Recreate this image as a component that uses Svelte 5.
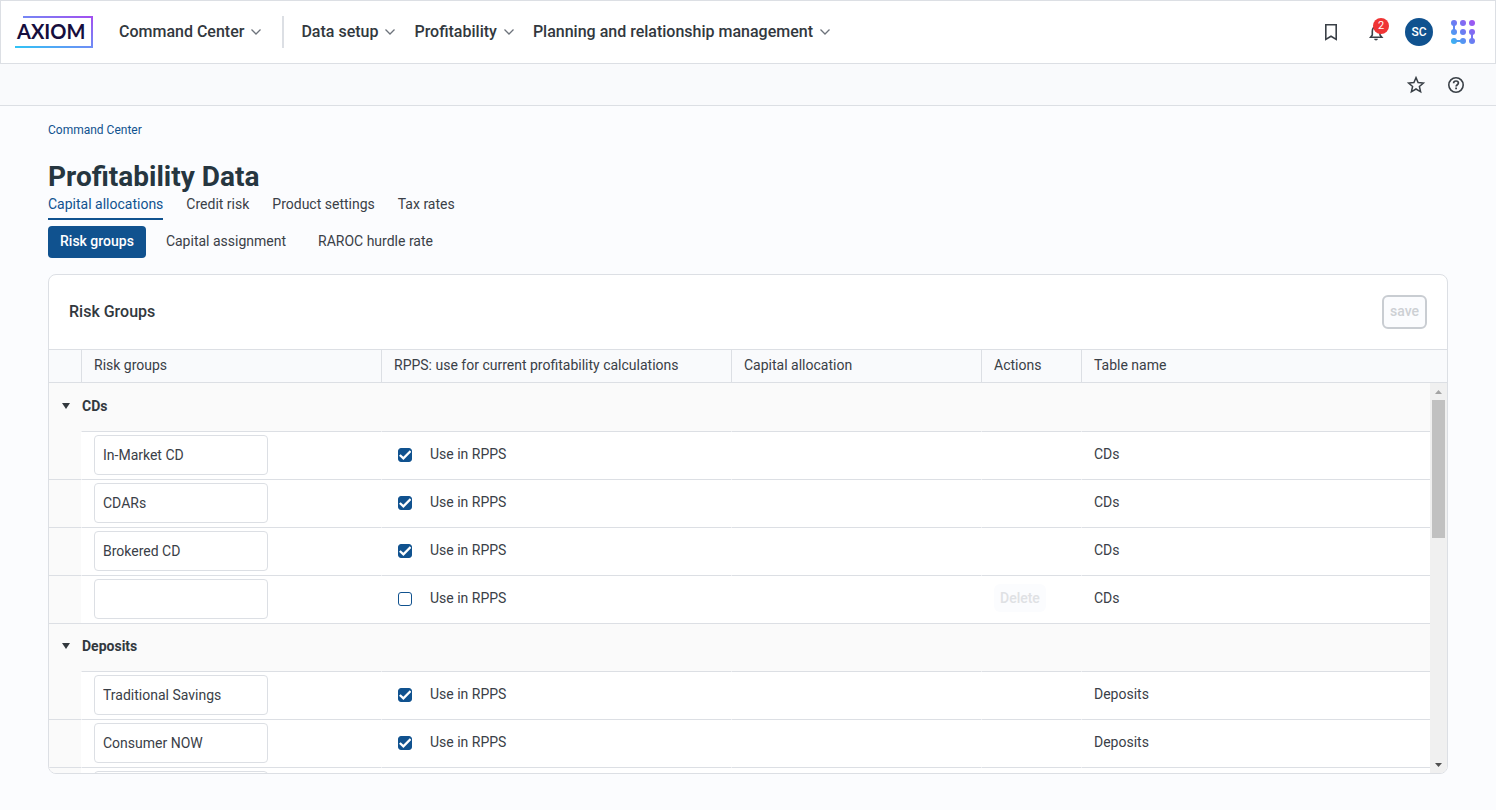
<script>
	import { onMount } from "svelte";

	const menus = ["Data setup", "Profitability", "Planning and relationship management"];
	const tabs = ["Capital allocations", "Credit risk", "Product settings", "Tax rates"];
	const subTabs = ["Risk groups", "Capital assignment", "RAROC hurdle rate"];

	let activeTab = "Capital allocations";
	let activeSubTab = "Risk groups";

	let groups = [
		{
			name: "CDs",
			open: true,
			rows: [
				{ name: "In-Market CD", use: true },
				{ name: "CDARs", use: true },
				{ name: "Brokered CD", use: true },
				{ name: "", use: false, isNew: true },
			],
		},
		{
			name: "Deposits",
			open: true,
			rows: [
				{ name: "Traditional Savings", use: true },
				{ name: "Consumer NOW", use: true },
				{ name: "Business Checking", use: true },
				{ name: "Money Market", use: true },
				{ name: "Health Savings", use: true },
				{ name: "", use: false, isNew: true },
			],
		},
		{
			name: "Loans",
			open: true,
			rows: [
				{ name: "Commercial", use: true },
				{ name: "Consumer", use: true },
				{ name: "Mortgage", use: true },
				{ name: "Home Equity", use: true },
				{ name: "Agriculture", use: true },
				{ name: "Small Business", use: true },
				{ name: "Student", use: true },
				{ name: "Credit Card", use: true },
				{ name: "", use: false, isNew: true },
			],
		},
	];

	let scroller;
	let track;
	let thumbHeight = 0;
	let thumbTop = 0;

	function updateThumb() {
		if (!scroller || !track) return;
		const ratio = scroller.clientHeight / scroller.scrollHeight;
		thumbHeight = Math.round(track.clientHeight * ratio);
		thumbTop = Math.round((scroller.scrollTop / scroller.scrollHeight) * track.clientHeight);
	}

	function scrollRows(amount) {
		scroller.scrollBy({ top: amount });
	}

	onMount(updateThumb);
</script>

<svelte:window on:resize={updateThumb} />

<div class="page">
	<header class="topbar">
		<a class="logo" href="#home" aria-label="Axiom home">
			<svg width="80" height="34" viewBox="0 0 80 34">
				<defs>
					<linearGradient id="logo-line" x1="0" y1="1" x2="1" y2="0">
						<stop offset="0" stop-color="#2fc3f5" />
						<stop offset="0.5" stop-color="#6f8df5" />
						<stop offset="1" stop-color="#a24ff0" />
					</linearGradient>
				</defs>
				<path d="M9 2H78V32H1" fill="none" stroke="url(#logo-line)" stroke-width="2" />
				<text x="3" y="24">AXIOM</text>
			</svg>
		</a>
		<button class="menu">
			Command Center
			<svg width="12" height="8" viewBox="0 0 12 8"><path d="M1.5 1.5L6 6L10.5 1.5" /></svg>
		</button>
		<span class="divider"></span>
		<nav>
			{#each menus as menu}
				<button class="menu">
					{menu}
					<svg width="12" height="8" viewBox="0 0 12 8"><path d="M1.5 1.5L6 6L10.5 1.5" /></svg>
				</button>
			{/each}
		</nav>
		<div class="user-tools">
			<button class="icon" aria-label="Bookmarks">
				<svg width="24" height="24" viewBox="0 0 24 24">
					<path d="M6.8 4.8H17.2V19.4L12 16.2L6.8 19.4Z" fill="none" stroke="#3a4047" stroke-width="1.6" />
				</svg>
			</button>
			<button class="icon bell" aria-label="Notifications">
				<svg width="24" height="24" viewBox="0 0 24 24">
					<path d="M6.6 17.2L8.3 15V11.5C8.3 8.8 9.6 7 12 7S16 8.8 16 11.5V15L17.8 17.2Z" fill="none" stroke="#3a4047" stroke-width="1.6" />
					<path d="M10.2 18.8H13.8C13.8 19.8 13 20.4 12 20.4S10.2 19.8 10.2 18.8Z" fill="#3a4047" />
				</svg>
				<span class="badge">2</span>
			</button>
			<button class="avatar">SC</button>
			<button class="icon" aria-label="Applications">
				<svg width="26" height="26" viewBox="0 0 26 26">
					<defs>
						<linearGradient id="dots" gradientUnits="userSpaceOnUse" x1="1" y1="25" x2="25" y2="1">
							<stop offset="0" stop-color="#35b8f2" />
							<stop offset="0.5" stop-color="#6b7cf2" />
							<stop offset="1" stop-color="#a64ff2" />
						</linearGradient>
					</defs>
					<g fill="url(#dots)">
						{#each [4, 13, 22] as cy}
							{#each [4, 13, 22] as cx}
								<circle {cx} {cy} r="3" />
							{/each}
						{/each}
						<rect x="3" y="4" width="2" height="9" />
						<rect x="21" y="13" width="2" height="9" />
						<rect x="4" y="21" width="9" height="2" />
					</g>
				</svg>
			</button>
		</div>
	</header>

	<div class="toolbar">
		<button class="icon" aria-label="Add to favorites">
			<svg width="20" height="20" viewBox="0 0 20 20">
				<path d="M10 2.6L12.1 7.5L17.4 8L13.4 11.5L14.6 16.8L10 14L5.4 16.8L6.6 11.5L2.6 8L7.9 7.5Z" fill="none" stroke="#3a4047" stroke-width="1.5" />
			</svg>
		</button>
		<button class="icon" aria-label="Help">
			<svg width="20" height="20" viewBox="0 0 20 20" fill="none" stroke="#3a4047">
				<circle cx="10" cy="10" r="7.2" stroke-width="1.6" />
				<path d="M7.6 8.2C7.6 6.8 8.6 6 10 6S12.4 6.8 12.4 8.1C12.4 9.7 10.1 9.8 10.1 11.6" stroke-width="1.7" />
				<path d="M9.2 13.4H11" stroke-width="1.8" />
			</svg>
		</button>
	</div>

	<main>
		<a class="breadcrumb" href="#command-center">Command Center</a>
		<h1>Profitability Data</h1>
		<div class="tabs">
			{#each tabs as tab}
				<button class:active={tab === activeTab} on:click={() => (activeTab = tab)}>{tab}</button>
			{/each}
		</div>
		<div class="sub-tabs">
			{#each subTabs as tab}
				<button class:active={tab === activeSubTab} on:click={() => (activeSubTab = tab)}>{tab}</button>
			{/each}
		</div>

		<section class="card">
			<div class="card-head">
				<h2>Risk Groups</h2>
				<button class="save" disabled>save</button>
			</div>
			<div class="grid">
				<div class="scroller" bind:this={scroller} on:scroll={updateThumb}>
					<table>
						<colgroup>
							<col class="c-gutter" />
							<col class="c-name" />
							<col class="c-use" />
							<col class="c-capital" />
							<col class="c-actions" />
							<col />
						</colgroup>
						<thead>
							<tr>
								<th></th>
								<th>Risk groups</th>
								<th>RPPS: use for current profitability calculations</th>
								<th>Capital allocation</th>
								<th>Actions</th>
								<th>Table name</th>
							</tr>
						</thead>
						<tbody>
							{#each groups as group}
								<tr class="group">
									<td colspan="6">
										<button on:click={() => (group.open = !group.open)}>
											<svg class:closed={!group.open} width="8" height="6" viewBox="0 0 8 6"><path d="M0 0H8L4 6Z" /></svg>
											{group.name}
										</button>
									</td>
								</tr>
								{#if group.open}
									{#each group.rows as row}
										<tr class="row">
											<td class="gutter"></td>
											<td class="name"><input type="text" aria-label="Risk group name" bind:value={row.name} /></td>
											<td>
												<label>
													<input type="checkbox" bind:checked={row.use} />
													Use in RPPS
												</label>
											</td>
											<td></td>
											<td>
												{#if row.isNew}
													<button class="delete" disabled>Delete</button>
												{/if}
											</td>
											<td>{group.name}</td>
										</tr>
									{/each}
								{/if}
							{/each}
						</tbody>
					</table>
				</div>
				<div class="scrollbar">
					<div class="corner"></div>
					<button aria-label="Scroll up" on:click={() => scrollRows(-48)}>
						<svg width="7" height="4" viewBox="0 0 7 4"><path d="M0 4H7L3.5 0Z" fill="#a3a3a3" /></svg>
					</button>
					<div class="track" bind:this={track}>
						<div class="thumb" style="height: {thumbHeight}px; margin-top: {thumbTop}px"></div>
					</div>
					<button aria-label="Scroll down" on:click={() => scrollRows(48)}>
						<svg width="7" height="4" viewBox="0 0 7 4"><path d="M0 0H7L3.5 4Z" fill="#505050" /></svg>
					</button>
				</div>
			</div>
		</section>
	</main>
</div>

<style>
	:global(body) {
		margin: 0;
		background: #fbfcfe;
	}

	* {
		box-sizing: border-box;
	}

	.page {
		display: flex;
		flex-direction: column;
		height: 100vh;
		font-family: Roboto, "Liberation Sans", sans-serif;
		font-size: 14px;
		line-height: 20px;
		color: #3a4047;
	}

	button,
	input {
		font: inherit;
		color: inherit;
	}

	button {
		border: none;
		background: none;
		padding: 0;
		cursor: pointer;
	}

	svg {
		display: block;
	}

	.topbar {
		display: flex;
		align-items: center;
		flex: none;
		height: 64px;
		padding: 0 19px 0 13px;
		border: 1px solid #dcdfe4;
		background: #fff;
	}

	.logo {
		margin-right: 25px;
	}

	.logo text {
		font-family: Lato, sans-serif;
		font-size: 20px;
		font-weight: 700;
		fill: #160e3d;
	}

	.menu {
		display: flex;
		align-items: center;
		gap: 6px;
		font-size: 16px;
		font-weight: 500;
		color: #32383e;
	}

	.menu path {
		fill: none;
		stroke: #6d737b;
		stroke-width: 1.3;
	}

	.divider {
		width: 2px;
		height: 32px;
		margin: 0 17px 0 20px;
		background: #dcdfe4;
	}

	nav {
		display: flex;
		gap: 18px;
	}

	.user-tools {
		display: flex;
		align-items: center;
		margin-left: auto;
		gap: 17px;
	}

	.user-tools .icon:first-child {
		margin-right: 4px;
	}

	.bell {
		position: relative;
	}

	.badge {
		position: absolute;
		top: -2px;
		right: -1px;
		width: 16px;
		height: 16px;
		border-radius: 50%;
		background: #ef3434;
		color: #fff;
		font-size: 11px;
		line-height: 16px;
	}

	.avatar {
		width: 28px;
		height: 28px;
		border-radius: 50%;
		background: #10528f;
		color: #fff;
		font-size: 12px;
		font-weight: 500;
	}

	.toolbar {
		display: flex;
		align-items: center;
		justify-content: flex-end;
		flex: none;
		gap: 20px;
		height: 42px;
		padding: 0 30px;
		border-bottom: 1px solid #dcdfe4;
		background: #f9fafc;
	}

	main {
		display: flex;
		flex-direction: column;
		flex: 1;
		min-height: 0;
		padding: 14px 48px 36px;
	}

	.breadcrumb {
		align-self: flex-start;
		font-size: 12px;
		color: #10528f;
		text-decoration: none;
	}

	h1 {
		margin: 21px 0 0;
		font-size: 28px;
		font-weight: 700;
		line-height: 32px;
		color: #263640;
	}

	.tabs {
		display: flex;
		gap: 23px;
		margin-top: 1px;
	}

	.tabs button {
		height: 26px;
		padding-bottom: 4px;
		border-bottom: 2px solid transparent;
	}

	.tabs .active {
		border-color: #10528f;
		color: #10528f;
	}

	.sub-tabs {
		display: flex;
		gap: 8px;
		margin-top: 6px;
	}

	.sub-tabs button {
		height: 32px;
		padding: 0 12px 2px;
		border-radius: 4px;
	}

	.sub-tabs .active {
		background: #10528f;
		color: #fff;
		font-weight: 500;
	}

	.card {
		display: flex;
		flex-direction: column;
		flex: 1;
		min-height: 0;
		margin-top: 16px;
		border: 1px solid #dcdfe4;
		border-radius: 8px;
		background: #fff;
		overflow: hidden;
	}

	.card-head {
		display: flex;
		align-items: center;
		justify-content: space-between;
		flex: none;
		height: 74px;
		padding: 0 20px;
	}

	h2 {
		margin: 0;
		font-size: 16px;
		font-weight: 500;
		color: #32383e;
	}

	.save {
		height: 34px;
		padding: 0 6px 2px;
		border: 2px solid #c9cdd2;
		border-radius: 6px;
		background: #fbfcfe;
		color: #cdd0d4;
		font-weight: 500;
	}

	.grid {
		display: flex;
		flex: 1;
		min-height: 0;
	}

	.scroller {
		flex: 1;
		overflow-y: auto;
		scrollbar-width: none;
	}

	table {
		width: 100%;
		table-layout: fixed;
		border-spacing: 0;
	}

	.c-gutter {
		width: 32px;
	}

	.c-name {
		width: 300px;
	}

	.c-use {
		width: 350px;
	}

	.c-capital {
		width: 250px;
	}

	.c-actions {
		width: 100px;
	}

	th {
		position: sticky;
		top: 0;
		z-index: 1;
		height: 34px;
		padding: 0 12px 2px;
		border: 1px solid #dcdfe4;
		border-right: none;
		background: #f9fafc;
		font-weight: 400;
		text-align: left;
	}

	th:first-child {
		border-left: none;
	}

	td {
		height: 48px;
		padding: 0 12px;
		border-top: 1px solid #dcdfe4;
	}

	.group td {
		padding: 0 13px 3px;
		background: #fafafa;
	}

	.group:first-child td {
		border-top-color: transparent;
	}

	.group button {
		display: flex;
		align-items: center;
		gap: 12px;
		font-weight: 700;
		color: #32383e;
	}

	.group path {
		fill: #32383e;
	}

	.closed {
		transform: rotate(-90deg);
	}

	.row td {
		padding-bottom: 4px;
		border-left: 1px solid #fff;
	}

	.row .name {
		padding-bottom: 2px;
	}

	.row .gutter {
		border-left: none;
		background: #fafafa;
	}

	.group + .row .gutter {
		border-top-color: transparent;
	}

	.name input {
		display: block;
		width: 174px;
		height: 40px;
		padding: 0 8px;
		border: 1px solid #dcdfe4;
		border-radius: 4px;
		background: #fff;
	}

	label {
		display: flex;
		align-items: center;
		gap: 18px;
		padding-left: 4px;
	}

	input[type="checkbox"] {
		appearance: none;
		width: 14px;
		height: 14px;
		margin: 2px 0 0;
		border: 1px solid #10528f;
		border-radius: 3px;
		background: #fff;
	}

	input[type="checkbox"]:checked {
		background: #10528f url("data:image/svg+xml,%3Csvg xmlns='http://www.w3.org/2000/svg' viewBox='0 0 12 12'%3E%3Cpath d='M.8 6L4.4 9.4L11.6 2' fill='none' stroke='white' stroke-width='2.3'/%3E%3C/svg%3E");
	}

	.delete {
		height: 28px;
		padding: 0 6px;
		border-radius: 6px;
		background: #fbfcfe;
		color: #dfe1e4;
		font-weight: 500;
	}

	.scrollbar {
		display: flex;
		flex-direction: column;
		flex: none;
		width: 17px;
		background: #f0f0f0;
	}

	.corner {
		height: 34px;
		border-top: 1px solid #dcdfe4;
		border-bottom: 1px solid #dcdfe4;
		background: #f9fafc;
	}

	.scrollbar button {
		display: grid;
		place-items: center;
		height: 17px;
	}

	.track {
		flex: 1;
		overflow: hidden;
		padding: 0 2px;
	}

	.thumb {
		background: #c1c1c1;
	}
</style>
